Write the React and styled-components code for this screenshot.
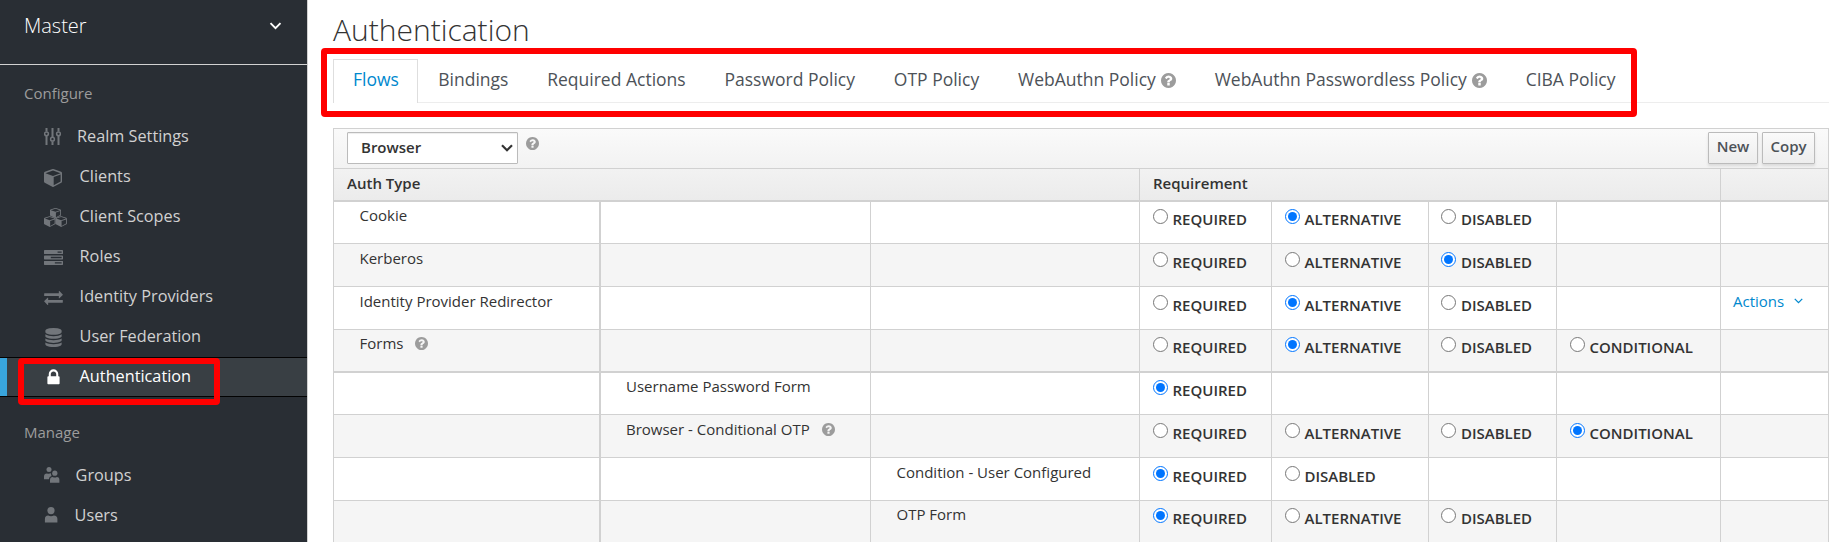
import React from "react";
import styled, { createGlobalStyle, css } from "styled-components";

const GlobalStyle = createGlobalStyle`
  * { box-sizing: border-box; }
  html, body { margin: 0; padding: 0; background: #fff; overflow: hidden; }
  body, input, select, button {
    font-family: "Open Sans", "Liberation Sans", sans-serif;
    color: #333;
  }
`;

const Page = styled.div`
  position: relative;
  display: flex;
  width: 1844px;
  height: 542px;
  overflow: hidden;
  font-size: 15px;
`;

/* ---------- sidebar ---------- */

const Sidebar = styled.nav`
  flex: none;
  width: 308px;
  height: 542px;
  background: #292e34;
  border-right: 1px solid #d1d1d1;
  overflow: hidden;
`;

const RealmPicker = styled.div`
  display: flex;
  justify-content: space-between;
  height: 65px;
  padding: 11px 25px 0 24px;
  border-bottom: 1px solid #d1d1d1;
  color: #fff;
  font-size: 20px;
  font-weight: 300;
  line-height: 30px;

  svg {
    margin-top: 11px;
  }
`;

const SectionTitle = styled.h2`
  height: ${(p) => p.$height}px;
  margin: 0;
  padding: ${(p) => p.$height - 34}px 0 0 24px;
  color: #9c9c9c;
  font-size: 15px;
  font-weight: 400;
  line-height: 20px;
`;

const NavItem = styled.a`
  display: flex;
  align-items: center;
  height: 40px;
  padding-bottom: 2px;
  padding-left: 44px;
  color: #d1d1d1;
  font-size: 16.25px;
  line-height: 38px;

  ${(p) =>
    p.$active &&
    css`
      border-top: 1px solid #030303;
      border-bottom: 1px solid #030303;
      background: #393f44;
      box-shadow: inset 7px 0 0 #39a5dc;
      color: #fff;
      line-height: 36px;
    `}
`;

const NavIcon = styled.span`
  display: flex;
  flex: none;
  width: ${(p) => p.$width}px;
  padding-top: ${(p) => p.$drop || 0}px;
  color: ${(p) => (p.$active ? "#fff" : "#72767b")};

  svg {
    display: block;
  }
`;

/* ---------- content ---------- */

const Content = styled.main`
  flex: none;
  width: 1521px;
  padding-left: 25px;
`;

const Title = styled.h1`
  height: 59px;
  margin: 0;
  padding-top: 9px;
  font-size: 30px;
  font-weight: 300;
  line-height: 41px;
`;

const Tabs = styled.div`
  display: flex;
  height: 44px;
  border-bottom: 1px solid #ededed;
`;

const Tab = styled.a`
  display: flex;
  align-items: center;
  gap: 5px;
  height: 44px;
  padding: 0 18.1px 5px 18.75px;
  border: 1px solid transparent;
  border-bottom: 0;
  color: #4d5258;
  font-size: 17.5px;
  line-height: 38px;
  white-space: nowrap;

  ${(p) =>
    p.$active &&
    css`
      padding-right: 18.6px;
      padding-left: 19px;
      border-color: #dedede;
      background: #fff;
      color: #0088ce;
    `}

  svg {
    display: block;
    margin-top: 2px;
  }
`;

const TablePanel = styled.section`
  width: 1496px;
  margin-top: 25px;
  border: 1px solid #d1d1d1;
  border-bottom: 0;
`;

const TableHead = styled.header`
  background: linear-gradient(#fafafa, #ebebeb);
`;

const Toolbar = styled.div`
  display: flex;
  align-items: flex-start;
  height: 40px;
  padding: 3px 13px 0;
  border-bottom: 1px solid #d1d1d1;
`;

const FlowSelect = styled.div`
  display: flex;
  align-items: center;
  justify-content: space-between;
  width: 171px;
  height: 32px;
  padding: 0 4px 2px 13px;
  border: 1px solid #bbb;
  border-radius: 1px;
  background: #fff;
  box-shadow: inset 0 1px 1px rgba(3, 3, 3, 0.075);
  font-weight: 600;
  line-height: 28px;

  svg {
    margin-top: 2px;
  }
`;

const ToolbarHelp = styled.span`
  display: flex;
  margin: 5px auto 0 8px;
`;

const Button = styled.button`
  width: ${(p) => p.$width}px;
  height: 32px;
  margin-left: 4px;
  padding: 0 0 4px;
  border: 1px solid #bbb;
  border-radius: 1px;
  background: linear-gradient(#fafafa, #ededed);
  box-shadow: 0 2px 3px rgba(3, 3, 3, 0.1);
  color: #4d5258;
  font-size: 15px;
  font-weight: 600;
  line-height: 26px;
`;

const HeadRow = styled.div`
  display: grid;
  grid-template-columns: 805px 581px 108px;
  height: 33px;
  border-bottom: 2px solid #d1d1d1;
`;

const HeadCell = styled.div`
  padding-left: 13px;
  border-left: ${(p) => (p.$first ? 0 : "1px solid #d1d1d1")};
  font-weight: 600;
  line-height: 28px;
`;

const Row = styled.div`
  display: grid;
  grid-template-columns: 265px 271px 269px 132px 157px 128px 164px 108px;
  height: ${(p) => (p.$tall ? 43 : 42) + (p.$heavy ? 1 : 0)}px;
  border-bottom: ${(p) => (p.$heavy ? 2 : 1)}px solid #d1d1d1;
  background: ${(p) => (p.$shaded ? "#f5f5f5" : "#fff")};
`;

const Cell = styled.div`
  display: flex;
  align-items: flex-start;
  padding-top: ${(p) => (p.$tall ? 4 : 3)}px;
  padding-left: ${(p) => p.$indent}px;
  border-left: ${(p) => p.$line}px solid #d1d1d1;
  line-height: 20px;
  white-space: nowrap;
`;

const CellHelp = styled.span`
  display: flex;
  margin: 4px 0 0 12px;
`;

const Option = styled.label`
  display: flex;
  align-items: flex-start;
  gap: 4.5px;
  font-weight: 600;
  line-height: 20px;

  span {
    padding-top: 4px;
  }
`;

const Radio = styled.input`
  flex: none;
  width: 15px;
  height: 15px;
  margin: 4px 0 0;
`;

const ActionsLink = styled.a`
  display: flex;
  gap: 10px;
  color: #0088ce;

  svg {
    margin-top: 7px;
  }
`;

/* outlines drawn over the page */
const Highlight = styled.div`
  position: absolute;
  left: ${(p) => p.$x}px;
  top: ${(p) => p.$y}px;
  width: ${(p) => p.$w}px;
  height: ${(p) => p.$h}px;
  border: 6px solid #f00;
  border-radius: 4px;
  pointer-events: none;
`;

/* ---------- icons ---------- */

const Chevron = ({ width, height, stroke }) => (
  <svg width={width} height={height} viewBox="0 0 12 8" fill="none" stroke="currentColor" strokeWidth={stroke}>
    <path d="M1 1.2 6 6.2 11 1.2" />
  </svg>
);

const Glyph = ({ width, height, box, d }) => (
  <svg width={width} height={height} viewBox={box} fill="currentColor">
    <path d={d} />
  </svg>
);

const HelpIcon = ({ size }) => (
  <svg width={size} height={size} viewBox="128 128 1536 1536" fill="#9c9c9c">
    <path d="M1024 1376v-192q0-14-9-23t-23-9h-192q-14 0-23 9t-9 23v192q0 14 9 23t23 9h192q14 0 23-9t9-23zm256-672q0-88-55.5-163t-138.5-116-170-41q-243 0-371 213-15 24 8 42l132 100q7 6 19 6 16 0 25-12 53-68 86-92 34-24 86-24 48 0 85.5 26t37.5 59q0 38-20 61t-68 45q-63 28-115.5 86.5t-52.5 125.5v36q0 14 9 23t23 9h192q14 0 23-9t9-23q0-19 21.5-49.5t54.5-49.5q32-18 49-28.5t46-35 44.5-48 28-60.5 12.5-81zm384 192q0 209-103 385.5t-279.5 279.5-385.5 103-385.5-103-279.5-279.5-103-385.5 103-385.5 279.5-279.5 385.5-103 385.5 103 279.5 279.5 103 385.5z" />
  </svg>
);

const SlidersIcon = () => (
  <svg width="17" height="17" viewBox="0 0 17 17" fill="none" stroke="currentColor">
    <g strokeWidth="2">
      <path d="M2.5 0V3.5M2.5 8V17M8.5 0V9M8.5 13.5V17M14.5 0V3.5M14.5 8V17" />
    </g>
    <g strokeWidth="1.5">
      <circle cx="2.5" cy="5.8" r="1.9" />
      <circle cx="8.5" cy="11.2" r="1.9" />
      <circle cx="14.5" cy="5.8" r="1.9" />
    </g>
  </svg>
);

const CUBE =
  "M896 1629l640-349v-636l-640 233v752zM832 764l698-254-698-254-698 254zM1664 512v768q0 35-18 65t-49 47l-704 384q-28 16-61 16t-61-16l-704-384q-31-17-49-47t-18-65v-768q0-40 23-73t61-47l704-256q22-8 44-8t44 8l704 256q38 14 61 47t23 73z";

const CubeIcon = () => <Glyph width="18" height="18" box="0 128 1664 1664" d={CUBE} />;

const CubesIcon = () => (
  <svg width="23" height="19" viewBox="0 0 23 19" fill="currentColor">
    <path transform="translate(6 -.9) scale(.0066 .0062)" d={CUBE} />
    <path transform="translate(0 7.3) scale(.0069 .0065)" d={CUBE} />
    <path transform="translate(11.4 7.3) scale(.0069 .0065)" d={CUBE} />
  </svg>
);

const TasksIcon = () => (
  <Glyph
    width="19"
    height="15"
    box="0 128 1792 1408"
    d="M1024 1408h640v-128h-640v128zm-384-512h1024v-128h-1024v128zm640-512h384v-128h-384v128zm512 832v256q0 26-19 45t-45 19h-1664q-26 0-45-19t-19-45v-256q0-26 19-45t45-19h1664q26 0 45 19t19 45zm0-512v256q0 26-19 45t-45 19h-1664q-26 0-45-19t-19-45v-256q0-26 19-45t45-19h1664q26 0 45 19t19 45zm0-512v256q0 26-19 45t-45 19h-1664q-26 0-45-19t-19-45v-256q0-26 19-45t45-19h1664q26 0 45 19t19 45z"
  />
);

const ExchangeIcon = () => (
  <Glyph
    width="19"
    height="14"
    box="0 288 1792 1344"
    d="M1792 1184v192q0 13-9.5 22.5t-22.5 9.5h-1376v192q0 13-9.5 22.5t-22.5 9.5q-12 0-24-10l-319-320q-9-9-9-22 0-14 9-23l320-320q9-9 23-9 13 0 22.5 9.5t9.5 22.5v192h1376q13 0 22.5 9.5t9.5 22.5zm0-544q0 14-9 23l-320 320q-9 9-23 9-13 0-22.5-9.5t-9.5-22.5v-192h-1376q-13 0-22.5-9.5t-9.5-22.5v-192q0-13 9.5-22.5t22.5-9.5h1376v-192q0-14 9-23t23-9q12 0 24 10l319 319q9 9 9 23z"
  />
);

const DatabaseIcon = () => (
  <Glyph
    width="19"
    height="19"
    box="0 0 1792 1792"
    d="M896 768q237 0 443-43t325-127v170q0 69-103 128t-280 93.5-385 34.5-385-34.5-280-93.5-103-128v-170q119 84 325 127t443 43zm0 768q237 0 443-43t325-127v170q0 69-103 128t-280 93.5-385 34.5-385-34.5-280-93.5-103-128v-170q119 84 325 127t443 43zm0-384q237 0 443-43t325-127v170q0 69-103 128t-280 93.5-385 34.5-385-34.5-280-93.5-103-128v-170q119 84 325 127t443 43zm0-1152q208 0 385 34.5t280 93.5 103 128v128q0 69-103 128t-280 93.5-385 34.5-385-34.5-280-93.5-103-128v-128q0-69 103-128t280-93.5 385-34.5z"
  />
);

const LockIcon = () => (
  <Glyph
    width="19"
    height="19"
    box="0 0 1792 1792"
    d="M640 768h512v-192q0-106-75-181t-181-75-181 75-75 181v192zm832 96v576q0 40-28 68t-68 28h-960q-40 0-68-28t-28-68v-576q0-40 28-68t68-28h32v-192q0-184 132-316t316-132 316 132 132 316v192h32q40 0 68 28t28 68z"
  />
);

const UserIcon = () => (
  <svg width="15" height="16" viewBox="0 0 15 16" fill="currentColor">
    <circle cx="7" cy="3.6" r="3.6" />
    <path d="M.9 15.6V12Q.9 8.4 4.2 8.4Q7 10 9.8 8.4Q13.4 8.4 13.4 12V15.6z" />
  </svg>
);

const GroupIcon = () => (
  <svg width="16" height="16" viewBox="0 0 16 16" fill="currentColor">
    <circle cx="5" cy="2.5" r="2.5" />
    <path d="M0 12.2V9.4Q0 6.4 3 6.4Q4.6 7.2 6.9 6.3Q7 8.2 7.6 8.9Q5 9.4 4.9 12.2z" />
    <circle cx="10.8" cy="6.2" r="2.6" />
    <path d="M6 15.7V13Q6 10 8.7 10Q10.8 11 12.9 10Q15.4 10 15.4 13V15.7z" />
  </svg>
);

/* ---------- data ---------- */

const CONFIGURE = [
  { label: "Realm Settings", icon: SlidersIcon, width: 33 },
  { label: "Clients", icon: CubeIcon, width: 35.6, drop: 3 },
  { label: "Client Scopes", icon: CubesIcon, width: 35.6, drop: 3 },
  { label: "Roles", icon: TasksIcon, width: 35.6, drop: 2 },
  { label: "Identity Providers", icon: ExchangeIcon, width: 35.6, drop: 4 },
  { label: "User Federation", icon: DatabaseIcon, width: 35.6, drop: 3 },
  { label: "Authentication", icon: LockIcon, width: 35.6, drop: 3, active: true },
];

const MANAGE = [
  { label: "Groups", icon: GroupIcon, width: 31.6 },
  { label: "Users", icon: UserIcon, width: 30.6 },
];

const TABS = [
  { label: "Flows", active: true },
  { label: "Bindings" },
  { label: "Required Actions" },
  { label: "Password Policy" },
  { label: "OTP Policy" },
  { label: "WebAuthn Policy", help: true },
  { label: "WebAuthn Passwordless Policy", help: true },
  { label: "CIBA Policy" },
];

const R = "REQUIRED";
const A = "ALTERNATIVE";
const D = "DISABLED";
const C = "CONDITIONAL";

const ROWS = [
  { name: "Cookie", level: 0, options: [R, A, D], value: A },
  { name: "Kerberos", level: 0, options: [R, A, D], value: D, tall: true },
  { name: "Identity Provider Redirector", level: 0, options: [R, A, D], value: A, tall: true, actions: true },
  { name: "Forms", level: 0, options: [R, A, D, C], value: A, help: true, heavy: true },
  { name: "Username Password Form", level: 1, options: [R], value: R },
  { name: "Browser - Conditional OTP", level: 1, options: [R, A, D, C], value: C, help: true, tall: true },
  { name: "Condition - User Configured", level: 2, options: [R, D], value: R, tall: true },
  { name: "OTP Form", level: 2, options: [R, A, D], value: R },
];

const NAME_CELLS = [
  { line: 0, indent: 25.5 },
  { line: 2, indent: 25 },
  { line: 1, indent: 25.5 },
];

const OPTION_INDENTS = [13, 13, 12.4, 13];

const NavList = ({ items }) =>
  items.map(({ label, icon: Icon, width, drop, active }) => (
    <NavItem key={label} $active={active}>
      <NavIcon $width={width} $drop={drop} $active={active}>
        <Icon />
      </NavIcon>
      {label}
    </NavItem>
  ));

const FlowRow = ({ row, index }) => (
  <Row $tall={row.tall} $heavy={row.heavy} $shaded={index % 2 === 1}>
    {NAME_CELLS.map((cell, level) => (
      <Cell key={level} $line={cell.line} $indent={cell.indent} $tall={row.tall}>
        {row.level === level && row.name}
        {row.level === level && row.help && (
          <CellHelp>
            <HelpIcon size={13} />
          </CellHelp>
        )}
      </Cell>
    ))}
    {OPTION_INDENTS.map((indent, i) => (
      <Cell key={i} $line={1} $indent={indent} $tall={row.tall}>
        {row.options[i] && (
          <Option>
            <Radio type="radio" name={row.name} defaultChecked={row.options[i] === row.value} />
            <span>{row.options[i]}</span>
          </Option>
        )}
      </Cell>
    ))}
    <Cell $line={1} $indent={12} $tall={row.tall}>
      {row.actions && (
        <ActionsLink>
          Actions
          <Chevron width="9" height="6" stroke="1.7" />
        </ActionsLink>
      )}
    </Cell>
  </Row>
);

export default function App() {
  return (
    <>
      <GlobalStyle />
      <Page>
        <Sidebar>
          <RealmPicker>
            Master
            <Chevron width="13" height="8" stroke="1.9" />
          </RealmPicker>
          <SectionTitle $height={52}>Configure</SectionTitle>
          <NavList items={CONFIGURE} />
          <SectionTitle $height={59}>Manage</SectionTitle>
          <NavList items={MANAGE} />
        </Sidebar>
        <Content>
          <Title>Authentication</Title>
          <Tabs>
            {TABS.map((tab) => (
              <Tab key={tab.label} $active={tab.active}>
                {tab.label}
                {tab.help && <HelpIcon size={15} />}
              </Tab>
            ))}
          </Tabs>
          <TablePanel>
            <TableHead>
              <Toolbar>
                <FlowSelect>
                  Browser
                  <Chevron width="12" height="8" stroke="2.2" />
                </FlowSelect>
                <ToolbarHelp>
                  <HelpIcon size={13} />
                </ToolbarHelp>
                <Button $width={50}>New</Button>
                <Button $width={53}>Copy</Button>
              </Toolbar>
              <HeadRow>
                <HeadCell $first>Auth Type</HeadCell>
                <HeadCell>Requirement</HeadCell>
                <HeadCell />
              </HeadRow>
            </TableHead>
            {ROWS.map((row, index) => (
              <FlowRow key={row.name} row={row} index={index} />
            ))}
          </TablePanel>
        </Content>
        <Highlight $x={321} $y={48} $w={1316} $h={69} />
        <Highlight $x={18} $y={358} $w={202} $h={47} />
      </Page>
    </>
  );
}
